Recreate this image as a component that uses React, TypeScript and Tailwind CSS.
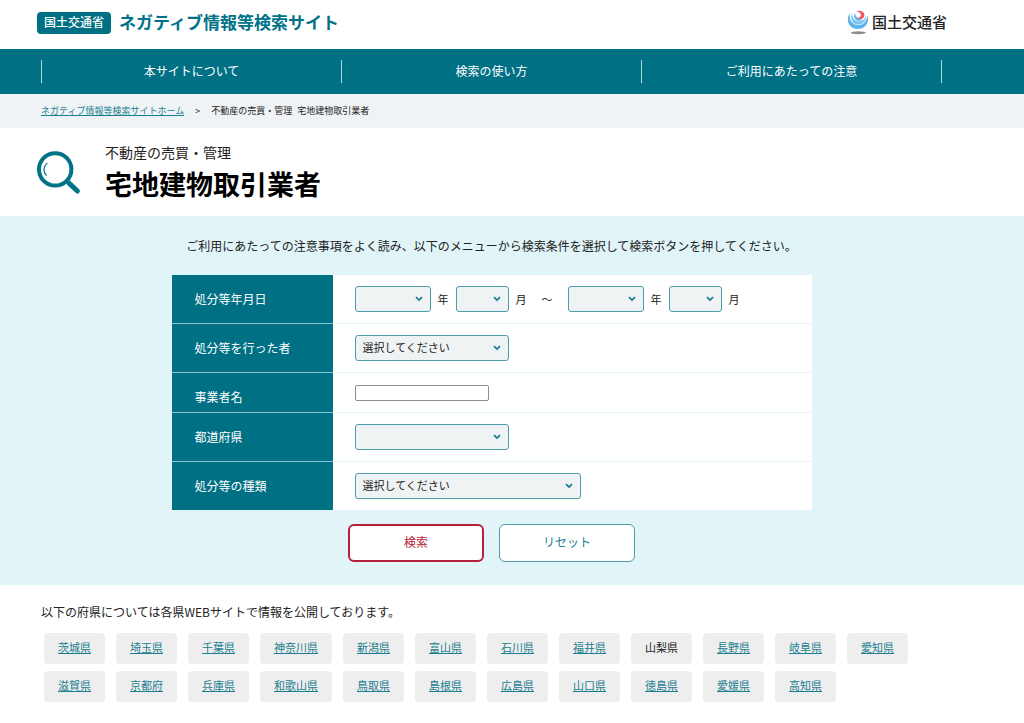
import React from 'react';

const NAV = ['本サイトについて', '検索の使い方', 'ご利用にあたっての注意'];

const PREFECTURES = [
  '茨城県', '埼玉県', '千葉県', '神奈川県', '新潟県', '富山県', '石川県', '福井県',
  '山梨県', '長野県', '岐阜県', '愛知県', '滋賀県', '京都府', '兵庫県', '和歌山県',
  '鳥取県', '島根県', '広島県', '山口県', '徳島県', '愛媛県', '高知県',
];

const YEARS = ['2020', '2021', '2022', '2023', '2024'];
const MONTHS = ['1', '2', '3', '4', '5', '6', '7', '8', '9', '10', '11', '12'];

function Select({
  id,
  label,
  width,
  placeholder = '',
  options = [],
}: {
  id: string;
  label?: string;
  width: string;
  placeholder?: string;
  options?: string[];
}) {
  return (
    <span className={`relative inline-flex ${width}`}>
      <select
        id={id}
        aria-label={label}
        className="h-[26px] w-full appearance-none rounded-[3px] border border-[#4d9cab] bg-[#eff3f4] pr-5 pb-[2px] pl-[7px] text-[11px] text-[#222]"
      >
        <option value="">{placeholder}</option>
        {options.map((o) => (
          <option key={o}>{o}</option>
        ))}
      </select>
      <svg
        viewBox="0 0 8 6"
        className="pointer-events-none absolute top-[10px] right-2 h-[6px] w-2"
        fill="none"
        stroke="#1c7f91"
        strokeWidth="1.8"
        aria-hidden="true"
      >
        <path d="M1 1.2 L4 4.1 L7 1.2" />
      </svg>
    </span>
  );
}

function MinistryMark() {
  return (
    <svg viewBox="0 0 22 25" className="h-[25px] w-[22px]" aria-hidden="true">
      <path d="M2.6 3.2 C-0.8 8 0.2 18.6 10.4 19 C18.6 19.2 22.8 12 20.4 5.2 C19.6 11.4 15.8 15.4 10.8 15.1 C5.6 14.8 2 10 2.6 3.2 Z" fill="#5fb4e6" />
      <path d="M5 2.4 C2.8 8 5.6 14.6 10.8 14.6 C15.6 14.6 18.8 11 19.2 5.8 C17.4 9.8 14.6 11.4 11.4 11.2 C7.4 10.9 4.8 7.4 5 2.4 Z" fill="#7cc4ee" />
      <path d="M7.6 3 C6.4 6.6 8 10.8 11.6 10.8 C13.2 10.8 14.2 10.2 15 9.2 C11.6 9.6 8.8 7 7.6 3 Z" fill="#5fb4e6" />
      <path d="M9.2 1.5 C12.8 -0.4 17.2 1.6 17.4 5 C17.5 7.2 15.6 8.9 13.2 9 C11.8 9 10.8 8.2 10.4 7.4 C12.6 8 14 6.8 13.8 4.8 C13.6 2.8 11.8 1.6 9.2 1.5 Z" fill="#f0566a" />
      <ellipse cx="11.3" cy="22.8" rx="7.6" ry="1.5" fill="#8b8b8b" />
    </svg>
  );
}

function SearchMark() {
  return (
    <svg viewBox="0 0 44 44" className="h-11 w-11 shrink-0" fill="none" stroke="#007388" aria-hidden="true">
      <circle cx="18.2" cy="18.4" r="16.2" strokeWidth="4" />
      <path d="M29.8 30 L32 32.2" strokeWidth="3.5" />
      <path d="M32 32.2 L40.4 40" strokeWidth="5" strokeLinecap="round" />
      <path d="M10.4 11.8 C6 16 6 20.8 9.6 24.6" strokeWidth="1.1" />
    </svg>
  );
}

function Row({
  label,
  htmlFor,
  children,
  compact = false,
}: {
  label: string;
  htmlFor: string;
  children: React.ReactNode;
  compact?: boolean;
}) {
  return (
    <tr className="group">
      <th
        scope="row"
        className={`w-[161px] border-b border-[#8fc3cc] bg-[#007085] pl-[23px] text-left text-xs font-normal text-white group-last:border-b-0 ${compact ? 'pt-2' : ''}`}
      >
        <label htmlFor={htmlFor}>{label}</label>
      </th>
      <td
        className={`border-b border-[#e3f4f9] bg-white pl-[22px] group-last:h-12 group-last:border-b-0 ${compact ? 'h-10' : 'h-[49px]'}`}
      >
        <div className="flex items-center">{children}</div>
      </td>
    </tr>
  );
}

export default function App() {
  return (
    <div className="min-h-screen bg-white font-['Noto_Sans_CJK_JP','Noto_Sans',sans-serif] text-[#222]">
      <header>
        <div className="flex h-[49px] items-center justify-between pb-1 pl-[37px] pr-[77px]">
          <a href="#top" className="flex items-center gap-2">
            <span className="rounded-[4px] bg-[#007085] px-[7px] pt-[2px] pb-1 text-xs leading-4 font-medium text-white">
              国土交通省
            </span>
            <span className="pb-[2px] text-[17px] leading-6 font-bold text-[#007388]">ネガティブ情報等検索サイト</span>
          </a>
          <a href="#mlit" className="flex items-center gap-[3px]">
            <MinistryMark />
            <span className="pb-[2px] text-[15px] leading-5 font-medium text-[#222]">国土交通省</span>
          </a>
        </div>
        <nav className="bg-[#007085] py-[11px] pl-[41px] pr-[82px]">
          <ul className="grid grid-cols-3 border-l border-[#b5d8de]">
            {NAV.map((item) => (
              <li key={item} className="border-r border-[#b5d8de]">
                <a href="#nav" className="block pb-[2px] text-center text-xs leading-[21px] text-white">
                  {item}
                </a>
              </li>
            ))}
          </ul>
        </nav>
      </header>

      <nav aria-label="breadcrumb" className="bg-[#eff3f5] py-[10px] pl-[41px] pr-[82px] text-[9px] leading-[14px]">
        <ol className="flex">
          <li>
            <a href="#home" className="text-[#1c7f91] underline">ネガティブ情報等検索サイトホーム</a>
          </li>
          <li className="px-[11px]" aria-hidden="true">&gt;</li>
          <li className="flex gap-[5px]">
            <span>不動産の売買・管理</span>
            <span>宅地建物取引業者</span>
          </li>
        </ol>
      </nav>

      <main>
        <div className="flex h-[88px] items-center gap-6 pt-[2px] pl-[37px] pr-[82px]">
          <SearchMark />
          <h1 className="pt-[2px]">
            <span className="block text-[14px] leading-5">不動産の売買・管理</span>
            <span className="block text-[27px] leading-[44px] font-bold text-black">宅地建物取引業者</span>
          </h1>
        </div>

        <section className="bg-[#e1f4f8] pt-5 pb-[23px] pl-[41px] pr-[82px]">
          <p className="text-center text-xs leading-5">
            ご利用にあたっての注意事項をよく読み、以下のメニューから検索条件を選択して検索ボタンを押してください。
          </p>
          <form className="mx-auto mt-[19px] max-w-[640px]" onSubmit={(e) => e.preventDefault()}>
            <table className="w-full border-separate border-spacing-0">
              <tbody>
                <Row label="処分等年月日" htmlFor="from-year">
                  <Select id="from-year" width="w-[76px]" options={YEARS} />
                  <span className="ml-[7px] text-[11px]">年</span>
                  <span className="ml-[7px] flex">
                    <Select id="from-month" label="開始月" width="w-[53px]" options={MONTHS} />
                  </span>
                  <span className="ml-[7px] text-[11px]">月</span>
                  <span className="mx-[15px] text-[11px]">～</span>
                  <Select id="to-year" label="終了年" width="w-[76px]" options={YEARS} />
                  <span className="ml-[7px] text-[11px]">年</span>
                  <span className="ml-[7px] flex">
                    <Select id="to-month" label="終了月" width="w-[53px]" options={MONTHS} />
                  </span>
                  <span className="ml-[7px] text-[11px]">月</span>
                </Row>
                <Row label="処分等を行った者" htmlFor="authority">
                  <Select id="authority" width="w-[154px]" placeholder="選択してください" />
                </Row>
                <Row label="事業者名" htmlFor="company" compact>
                  <input
                    id="company"
                    type="text"
                    className="h-4 w-[134px] rounded-[2px] border border-[#8c8c8c] bg-white px-1 text-[11px]"
                  />
                </Row>
                <Row label="都道府県" htmlFor="prefecture">
                  <Select id="prefecture" width="w-[154px]" options={PREFECTURES} />
                </Row>
                <Row label="処分等の種類" htmlFor="kind">
                  <Select id="kind" width="w-[226px]" placeholder="選択してください" />
                </Row>
              </tbody>
            </table>
            <div className="mt-[14px] flex justify-center gap-[15px]">
              <button
                type="submit"
                className="h-[38px] w-[136px] rounded-md border-2 border-[#b5203a] bg-white pb-[3px] text-xs text-[#b5203a]"
              >
                検索
              </button>
              <button
                type="reset"
                className="h-[38px] w-[136px] rounded-md border border-[#4d9cab] bg-white pb-[3px] text-xs text-[#1c7f91]"
              >
                リセット
              </button>
            </div>
          </form>
        </section>

        <section className="pt-[17px] pb-5 pl-[41px] pr-[82px]">
          <p className="text-xs leading-5">以下の府県については各県WEBサイトで情報を公開しております。</p>
          <ul className="mt-[11px] ml-[3px] flex flex-wrap gap-x-[11px] gap-y-[7px] text-[11px] leading-[17px]">
            {PREFECTURES.map((name) => (
              <li key={name} className="rounded-[4px] bg-[#eee] px-[14px] pt-[6px] pb-2">
                {name === '山梨県' ? (
                  <span>{name}</span>
                ) : (
                  <a href="#prefecture" className="text-[#1c7f91] underline">{name}</a>
                )}
              </li>
            ))}
          </ul>
        </section>
      </main>
    </div>
  );
}
